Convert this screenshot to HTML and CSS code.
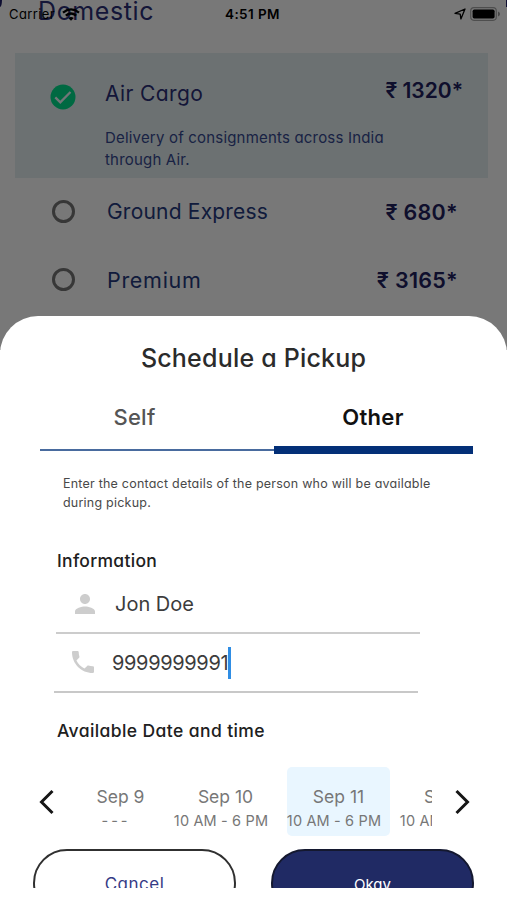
FILE: index.html
```html
<!DOCTYPE html>
<html lang="en">
	<head>
		<meta charset="UTF-8" />
		<meta name="viewport" content="width=device-width, initial-scale=1.0" />
		<title>Schedule a Pickup</title>
		<link rel="stylesheet" href="styles.css">
	</head>
	<body>
		<div class="screen">
			<div class="page">
				<h1 class="page-title">Domestic</h1>
				<div class="option selected">
					<svg class="check" viewBox="0 0 26 26">
						<circle cx="13" cy="13" r="12.5" fill="#00e08c" />
						<path d="M5.3 13.4l5 4.9L20.5 8" fill="none" stroke="#f0faff" stroke-width="2.3" />
					</svg>
					<div class="option-text">
						<div class="option-name air">Air Cargo</div>
						<p class="option-info">Delivery of consignments across India<br>through Air.</p>
					</div>
					<div class="price price-air">₹ 1320*</div>
				</div>
				<div class="option">
					<span class="radio"></span>
					<div class="option-name">Ground Express</div>
					<div class="price">₹ 680*</div>
				</div>
				<div class="option">
					<span class="radio"></span>
					<div class="option-name premium">Premium</div>
					<div class="price">₹ 3165*</div>
				</div>
			</div>

			<div class="corner corner-left"></div>
			<div class="corner corner-right"></div>

			<div class="status-bar">
				<span class="carrier">Carrier</span>
				<svg class="wifi" viewBox="0 0 18 13">
					<path d="M1 4.6Q9-1.8 17 4.6M3.8 7.7q5.2-4.3 10.4 0" fill="none" stroke="#000" stroke-width="2.3" />
					<path d="M6.2 10q2.8-2.2 5.6 0L9 12.8z" />
				</svg>
				<span class="clock">4:51 PM</span>
				<svg class="location" viewBox="0 0 12 12">
					<path d="M1 5.4L11 1 6.9 11 6.2 6.1z" fill="none" stroke="#000" stroke-width="1.3" stroke-linejoin="round" />
				</svg>
				<svg class="battery" viewBox="0 0 31 14">
					<rect x=".7" y=".7" width="25.6" height="12.6" rx="3.2" fill="none" stroke="#000" stroke-opacity=".35" stroke-width="1.2" />
					<rect x="2.6" y="2.5" width="22" height="9" rx="1.7" />
					<path d="M28 4.6q2 .8 2 2.4t-2 2.4z" fill-opacity=".4" />
				</svg>
			</div>

			<div class="scrim"></div>

			<!-- bottom sheet -->
			<div class="sheet">
				<h2 class="sheet-title">Schedule a Pickup</h2>
				<div class="tabs">
					<div class="tab">Self</div>
					<div class="tab active">Other</div>
				</div>
				<p class="hint">Enter the contact details of the person who will be available<br>during pickup.</p>

				<h3 class="label info-label">Information</h3>
				<div class="field name-field">
					<svg class="person" viewBox="4 4 16 16">
						<path d="M12 12c2.21 0 4-1.79 4-4s-1.79-4-4-4-4 1.79-4 4 1.79 4 4 4zm0 2c-2.67 0-8 1.34-8 4v2h16v-2c0-2.66-5.33-4-8-4z" />
					</svg>
					<span class="name">Jon Doe</span>
				</div>
				<div class="field phone-field">
					<svg class="phone" viewBox="3 3 18 18">
						<path d="M6.62 10.79c1.44 2.83 3.76 5.14 6.59 6.59l2.2-2.2c.27-.27.67-.36 1.02-.24 1.12.37 2.33.57 3.57.57.55 0 1 .45 1 1V20c0 .55-.45 1-1 1-9.39 0-17-7.61-17-17 0-.55.45-1 1-1h3.5c.55 0 1 .45 1 1 0 1.25.2 2.45.57 3.57.11.35.03.74-.25 1.02l-2.2 2.2z" />
					</svg>
					<span class="number">9999999991</span>
					<span class="caret"></span>
				</div>

				<h3 class="label date-label">Available Date and time</h3>
				<div class="picker">
					<svg class="arrow" viewBox="0 0 16 26">
						<path d="M13.5 2L2.5 13l11 11" />
					</svg>
					<div class="days">
						<div class="day"><span class="date">Sep 9</span><span class="hours none">---</span></div>
						<div class="day"><span class="date">Sep 10</span><span class="hours">10 AM - 6 PM</span></div>
						<div class="day picked"><span class="date">Sep 11</span><span class="hours">10 AM - 6 PM</span></div>
						<div class="day"><span class="date">Sep 12</span><span class="hours">10 AM - 6 PM</span></div>
					</div>
					<svg class="arrow" viewBox="0 0 16 26">
						<path d="M2.5 2l11 11-11 11" />
					</svg>
				</div>

				<div class="actions">
					<div class="btn cancel">Cancel</div>
					<div class="btn okay">Okay</div>
				</div>
			</div>
		</div>
	</body>
</html>
```
FILE: styles.css
```css
* {
	box-sizing: border-box;
}
body {
	margin: 0;
	background: #fff;
	font-family: Inter, "Open Sans", sans-serif;
	/* single-storey a */
	font-feature-settings: "cv11" 1;
}
h1,
h2,
h3,
p {
	margin: 0;
	font-weight: 400;
}
svg {
	display: block;
	flex: none;
}
.screen {
	position: relative;
	width: 507px;
	height: 900px;
	overflow: hidden;
}

/* page behind the sheet */
.page {
	height: 350px;
	color: #2b2f78;
}
.page-title {
	height: 53px;
	padding-left: 38px;
	font-size: 25px;
	line-height: 22px;
	letter-spacing: 0.6px;
}
.option {
	display: flex;
	align-items: center;
	height: 68px;
	margin: 0 19px 0 15px;
	padding-left: 35px;
}
.selected {
	align-items: flex-start;
	height: 125px;
	background: #e6f0f3;
}
.check {
	width: 26px;
	height: 26px;
	margin-top: 31px;
}
.option-text {
	margin-left: 29px;
	padding-top: 25px;
}
.option-name {
	font-size: 21px;
	line-height: 32px;
	letter-spacing: 0.2px;
	color: #253a80;
}
.option-name.air {
	letter-spacing: 0.4px;
	color: #2b2f78;
}
.option-name.premium {
	font-size: 21.5px;
	letter-spacing: 0.7px;
}
.option-info {
	margin-top: 17px;
	font-size: 15px;
	line-height: 22px;
	letter-spacing: 0.19px;
	color: #364a91;
	white-space: nowrap;
}
.price {
	margin-left: auto;
	margin-right: 30px;
	font-size: 21.5px;
	font-weight: 600;
	line-height: 32px;
	letter-spacing: 0.3px;
	color: #20205f;
	white-space: nowrap;
}
.price-air {
	margin-top: 22px;
	margin-right: 25px;
	font-size: 21px;
	letter-spacing: 0;
}
.radio {
	flex: none;
	width: 23px;
	height: 23px;
	margin: 0 32px 1px 2px;
	border: 3px solid #757575;
	border-radius: 50%;
}
.corner {
	position: absolute;
	top: 0;
	background: #20206a;
}
.corner-left {
	left: 0;
	width: 2px;
	height: 7px;
	border-bottom-right-radius: 2px 7px;
}
.corner-right {
	right: 0;
	width: 1px;
	height: 7px;
}

.status-bar {
	position: absolute;
	top: 4px;
	left: 0;
	display: flex;
	align-items: center;
	width: 507px;
	height: 20px;
	padding: 0 6px 0 9px;
	font-size: 13px;
	color: #000;
}
.carrier {
	width: 53px;
	letter-spacing: 0.4px;
}
.wifi {
	width: 18px;
	height: 13px;
}
.clock {
	margin: 0 auto 0 145px;
	font-size: 13.5px;
	font-weight: 600;
	letter-spacing: 0.4px;
}
.location {
	width: 12px;
	height: 12px;
}
.battery {
	width: 31px;
	height: 14px;
	margin-left: 4px;
}
.scrim {
	position: absolute;
	inset: 0 0 550px;
	background: rgba(0, 0, 0, 0.53);
}

.sheet {
	position: absolute;
	top: 316px;
	left: 0;
	width: 507px;
	height: 572px;
	overflow: hidden;
	background: #fff;
	border-radius: 38px 38px 0 0;
}
.sheet-title {
	height: 72px;
	padding-top: 25px;
	font-size: 25px;
	font-weight: 500;
	line-height: 34px;
	letter-spacing: 0.2px;
	text-align: center;
	color: #2b2b2b;
}
.tabs {
	display: flex;
	align-items: flex-start;
	margin: 0 34px 0 40px;
}
.tab {
	width: 234px;
	height: 63px;
	padding-right: 45px;
	border-bottom: 2px solid #496b9e;
	font-size: 22px;
	font-weight: 500;
	line-height: 58px;
	letter-spacing: 0.3px;
	text-align: center;
	color: #555;
}
.tab.active {
	width: 199px;
	height: 66px;
	padding-right: 1px;
	border-bottom: 8px solid #032f77;
	font-weight: 600;
	color: #111;
}
.hint {
	margin: 21px 0 0 63px;
	font-size: 12.5px;
	line-height: 18.5px;
	letter-spacing: 0.22px;
	color: #494949;
	white-space: nowrap;
}
.label {
	margin-left: 57px;
	font-size: 17.5px;
	font-weight: 500;
	line-height: 26px;
	letter-spacing: 0.4px;
	color: #202020;
}
.info-label {
	margin-top: 36px;
	letter-spacing: 0.3px;
}
.field {
	display: flex;
	align-items: center;
	width: 364px;
	color: #3c3c3c;
	font-size: 20px;
}
.field svg {
	fill: #cdcdcd;
}
.name-field {
	height: 60px;
	margin-left: 56px;
	border-bottom: 2px solid #ccc;
}
.person {
	width: 20px;
	height: 20px;
	margin: 2px 0 0 19px;
}
.name {
	margin: 2px 0 0 20px;
}
.phone-field {
	height: 59px;
	margin-left: 54px;
	border-bottom: 2px solid #c8c8c8;
}
.phone {
	width: 22px;
	height: 22px;
	margin: 0 0 2px 18px;
}
.number {
	margin-left: 18px;
	letter-spacing: -0.35px;
}
.caret {
	width: 3px;
	height: 32px;
	background: #2f8de4;
}
.date-label {
	margin-top: 25px;
}
.picker {
	display: flex;
	align-items: center;
	height: 69px;
	margin: 23px 36px 0 39px;
}
.arrow {
	width: 16px;
	height: 26px;
	fill: none;
	stroke: #161616;
	stroke-width: 3;
}
.days {
	display: flex;
	flex: none;
	width: 363px;
	height: 69px;
	margin: 0 22px 0 14px;
	overflow: hidden;
}
.day {
	display: flex;
	flex: none;
	flex-direction: column;
	align-items: center;
	width: 103px;
	margin-right: 10px;
	padding-top: 18px;
	color: #777;
	white-space: nowrap;
}
.day:first-child {
	margin-right: 2px;
}
.picked {
	background: #e9f6ff;
	border-radius: 5px;
}
.date {
	font-size: 17.5px;
	line-height: 24px;
}
.hours {
	margin-right: 9px;
	font-size: 14.5px;
	line-height: 23px;
	letter-spacing: 0.15px;
}
.hours.none {
	letter-spacing: 3px;
}
.actions {
	display: flex;
	gap: 35px;
	margin: 13px 0 0 33px;
}
.btn {
	width: 203px;
	height: 68px;
	border: 2px solid #303030;
	border-radius: 38px;
	font-size: 17px;
	line-height: 67px;
	letter-spacing: 0.5px;
	text-align: center;
	color: #363b86;
}
.okay {
	background: #202a64;
	border-color: #14182f;
	font-size: 15px;
	letter-spacing: 0;
	color: #fff;
}
```
